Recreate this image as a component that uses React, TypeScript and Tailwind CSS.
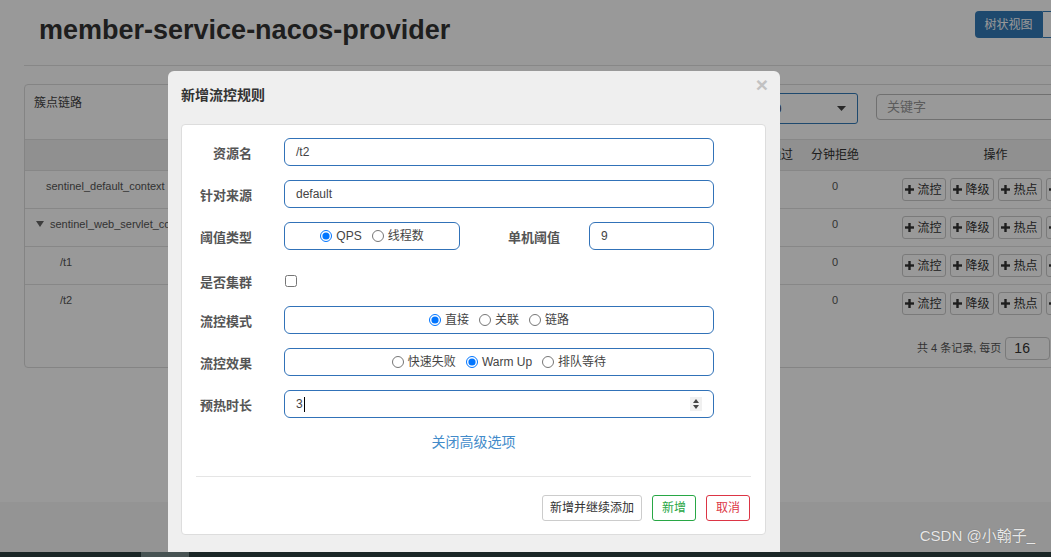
import React from 'react';

const cols = [
  { title: '资源名', w: 'w-[447px]' },
  { title: '通过QPS', w: 'w-[66px]' },
  { title: '拒绝QPS', w: 'w-[66px]' },
  { title: '并发数', w: 'w-[66px]' },
  { title: '平均RT', w: 'w-[66px]' },
  { title: '分钟通过', w: 'w-[66px]' },
  { title: '分钟拒绝', w: 'w-[66px]' },
  { title: '操作', w: 'w-[255px]' },
];

const rows = [
  { name: 'sentinel_default_context', pad: 'pl-[21px]', tree: false },
  { name: 'sentinel_web_servlet_context', pad: 'pl-[11px]', tree: true },
  { name: '/t1', pad: 'pl-[35px]', tree: false },
  { name: '/t2', pad: 'pl-[35px]', tree: false },
];

const Plus = () => (
  <svg width="9" height="9" viewBox="0 0 9 9" className="fill-[#333]">
    <rect x="3.3" y="0" width="2.4" height="9" />
    <rect x="0" y="3.3" width="9" height="2.4" />
  </svg>
);

const ActionBtn = ({ label }: { label: string }) => (
  <button
    type="button"
    className="h-[23px] w-[44px] shrink-0 border border-[#ccc] rounded-[3px] bg-white flex items-center justify-center gap-[3px] text-[12px] text-[#333]"
  >
    <Plus />
    {label}
  </button>
);

const Label = ({ children, w }: { children: React.ReactNode; w: string }) => (
  <div className={`${w} shrink-0 pt-[4px] text-right text-[13px] font-bold text-[#555] leading-[18px]`}>
    {children}
  </div>
);

const Radio = ({ label, checked }: { label: string; checked?: boolean }) => (
  <label className="flex items-center gap-[4px]">
    <input type="radio" readOnly checked={!!checked} className="m-0 w-[12px] h-[12px]" />
    <span>{label}</span>
  </label>
);

const boxCls =
  'h-[28px] rounded-[6px] border border-[#3172b8] bg-white flex items-center text-[12px] text-[#444]';

export default function App() {
  return (
    <div className="w-[1051px] h-[557px] overflow-hidden flex flex-col font-['Liberation_Sans','Noto_Sans_CJK_SC',sans-serif]">
      <div className="relative h-[552px] overflow-hidden bg-white flex flex-col">
        {/* page */}
        <div className="w-[1124px]">
          <div className="ml-[24px] w-[1100px] h-[66px] border-b border-[#e1e1e1] flex items-start justify-between">
            <h1 className="ml-[15px] mt-[14px] leading-[32px] text-[27px] font-bold text-[#333]">
              member-service-nacos-provider
            </h1>
            <div className="mt-[11px] mr-[15px] flex">
              <button type="button" className="w-[67px] h-[27px] bg-[#337ab7] text-white text-[12px] rounded-l-[4px]">
                树状视图
              </button>
              <button type="button" className="w-[67px] h-[27px] border border-[#337ab7] bg-white text-[#337ab7] text-[12px] rounded-r-[4px]">
                列表视图
              </button>
            </div>
          </div>

          <div className="ml-[24px] mt-[18px] w-[1100px] border border-[#ddd] rounded-[4px]">
            <div className="h-[55px] border-b border-[#e1e1e1] flex items-start">
              <div className="w-[732px] pl-[9px] pt-[9px] text-[12px] leading-[18px] text-[#444]">簇点链路</div>
              <div className="mt-[8px] w-[101px] h-[31px] border border-[#337ab7] rounded-[3px] flex items-center justify-between pl-[10px] pr-[11px] text-[12px] text-[#333]">
                <span>10</span>
                <svg width="9" height="5" viewBox="0 0 9 5" className="fill-[#444]">
                  <polygon points="0,0 9,0 4.5,5" />
                </svg>
              </div>
              <div className="ml-[18px] mt-[9px] w-[180px] h-[26px] border border-[#bbb] rounded-[4px] pl-[10px] flex items-center text-[13px] text-[#999]">
                关键字
              </div>
            </div>

            <div className="h-[31px] bg-[#f0f0f0] border-b border-[#e1e1e1] flex items-center text-[12px] text-[#333]">
              {cols.map((c) => (
                <div key={c.title} className={`${c.w} shrink-0 text-center`}>
                  {c.title}
                </div>
              ))}
            </div>

            {rows.map((r, i) => (
              <div
                key={r.name}
                className={`h-[38px] flex items-start pt-[7px] text-[11px] leading-[16px] text-[#555] ${i < rows.length - 1 ? 'border-b border-[#e1e1e1]' : ''}`}
              >
                <div className={`w-[447px] shrink-0 flex items-center gap-[6px] ${r.pad}`}>
                  {r.tree && (
                    <svg width="8" height="6" viewBox="0 0 8 6" className="fill-[#666]">
                      <polygon points="0,0 8,0 4,6" />
                    </svg>
                  )}
                  <span>{r.name}</span>
                </div>
                {[0, 1, 2, 3, 4, 5].map((k) => (
                  <div key={k} className="w-[66px] shrink-0 text-center">
                    0
                  </div>
                ))}
                <div className="w-[255px] shrink-0 flex justify-center gap-[4px]">
                  <ActionBtn label="流控" />
                  <ActionBtn label="降级" />
                  <ActionBtn label="热点" />
                  <ActionBtn label="授权" />
                </div>
              </div>
            ))}

            <div className="h-[44px] pt-[6px] pl-[892px] flex items-center text-[11px] text-[#555] whitespace-nowrap overflow-hidden">
              <span className="shrink-0">共 4 条记录, 每页</span>
              <div className="ml-[4px] shrink-0 w-[45px] h-[23px] border border-[#ccc] rounded-[4px] pl-[8px] flex items-center text-[14px] text-[#333]">
                16
              </div>
              <span className="ml-[6px] shrink-0">条记录</span>
            </div>
          </div>
        </div>

        <div className="mt-auto h-[50px] bg-[#f7f7f7]" />

        {/* backdrop */}
        <div className="absolute inset-0 bg-black/40" />

        {/* modal */}
        <div className="absolute left-[168px] top-[71px] w-[612px] h-[520px] bg-[#efefef] rounded-[6px]">
          <div className="pt-[14px] pl-[13px] pr-[12px] flex items-start justify-between">
            <div className="text-[14px] font-bold leading-[20px] text-[#333]">新增流控规则</div>
            <div className="-mt-[11px] text-[21px] leading-[21px] font-bold text-[#c2c2c2]">×</div>
          </div>

          <div className="ml-[13px] mt-[19px] w-[585px] bg-white border border-[#ddd] rounded-[4px] pt-[13px] px-[14px] pb-[13px]">
            <div className="flex flex-col gap-[14px]">
              <div className="flex items-center">
                <Label w="w-[56px]">资源名</Label>
                <div className={`ml-[32px] w-[430px] pl-[11px] ${boxCls}`}>/t2</div>
              </div>
              <div className="flex items-center">
                <Label w="w-[56px]">针对来源</Label>
                <div className={`ml-[32px] w-[430px] pl-[11px] ${boxCls}`}>default</div>
              </div>
              <div className="flex items-center">
                <Label w="w-[56px]">阈值类型</Label>
                <div className={`ml-[32px] w-[176px] justify-center gap-[10px] text-[#444] ${boxCls}`}>
                  <Radio label="QPS" checked />
                  <Radio label="线程数" />
                </div>
                <Label w="w-[100px]">单机阈值</Label>
                <div className={`ml-[29px] w-[125px] pl-[11px] ${boxCls}`}>9</div>
              </div>
              <div className="flex items-center h-[28px] pt-[6px]">
                <Label w="w-[56px]">是否集群</Label>
                <input type="checkbox" readOnly className="ml-[33px] m-0 w-[12px] h-[12px]" />
              </div>
              <div className="flex items-center">
                <Label w="w-[56px]">流控模式</Label>
                <div className={`ml-[32px] w-[430px] justify-center gap-[10px] ${boxCls}`}>
                  <Radio label="直接" checked />
                  <Radio label="关联" />
                  <Radio label="链路" />
                </div>
              </div>
              <div className="flex items-center">
                <Label w="w-[56px]">流控效果</Label>
                <div className={`ml-[32px] w-[430px] justify-center gap-[10px] ${boxCls}`}>
                  <Radio label="快速失败" />
                  <Radio label="Warm Up" checked />
                  <Radio label="排队等待" />
                </div>
              </div>
              <div className="flex items-center">
                <Label w="w-[56px]">预热时长</Label>
                <div className={`ml-[32px] w-[430px] pl-[11px] pr-[11px] ${boxCls}`}>
                  <span>3</span>
                  <span className="ml-[1px] w-px h-[15px] bg-black" />
                  <span className="ml-auto w-[12px] h-[14px] bg-[#f0f0f0] flex flex-col items-center justify-center gap-[2px]">
                    <svg width="6" height="4" viewBox="0 0 6 4" className="fill-[#444]">
                      <polygon points="3,0 6,4 0,4" />
                    </svg>
                    <svg width="6" height="4" viewBox="0 0 6 4" className="fill-[#444]">
                      <polygon points="0,0 6,0 3,4" />
                    </svg>
                  </span>
                </div>
              </div>
            </div>

            <div className="mt-[16px] text-center text-[14px] leading-[16px] text-[#428bca]">关闭高级选项</div>

            <div className="mt-[26px] border-t border-[#e5e5e5]" />

            <div className="mt-[18px] flex justify-end gap-[10px] mr-[1px]">
              <button type="button" className="h-[26px] px-[7px] border border-[#ccc] rounded-[3px] bg-white text-[12px] text-[#333]">
                新增并继续添加
              </button>
              <button type="button" className="h-[26px] w-[44px] border border-[#28a745] rounded-[3px] bg-white text-[12px] text-[#28a745]">
                新增
              </button>
              <button type="button" className="h-[26px] w-[44px] border border-[#dc3545] rounded-[3px] bg-white text-[12px] text-[#dc3545]">
                取消
              </button>
            </div>
          </div>
        </div>

        <div className="absolute right-[16px] top-[527px] text-[15px] leading-[18px] text-white/85 [text-shadow:0_0_1px_rgba(0,0,0,0.4)]">
          CSDN @小翰子_
        </div>
      </div>

      <div className="h-[5px] bg-[#1a2626] flex">
        <div className="ml-[141px] w-[48px] bg-[#475353]" />
      </div>
    </div>
  );
}
